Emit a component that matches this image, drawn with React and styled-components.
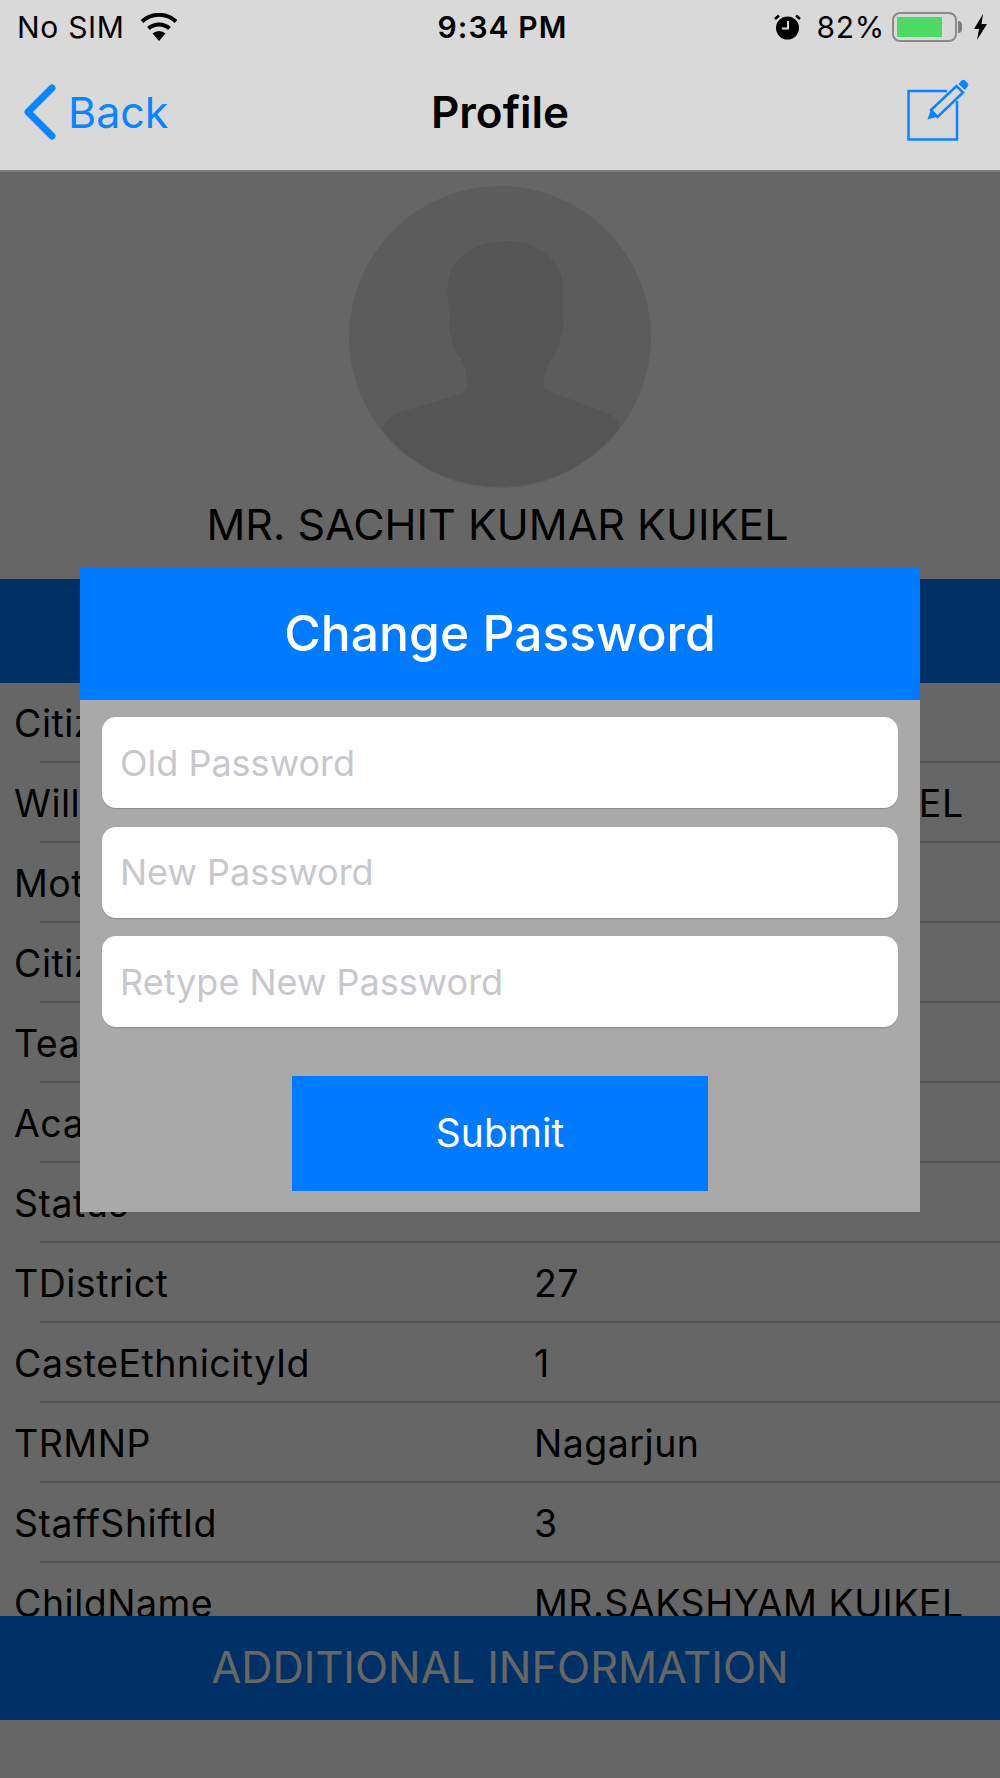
import React from 'react';
import styled, { createGlobalStyle } from 'styled-components';

const Global = createGlobalStyle`
  html, body {
    margin: 0;
    padding: 0;
    background: #fff;
  }
  * {
    box-sizing: border-box;
  }
`;

const Screen = styled.div`
  position: relative;
  width: 1000px;
  height: 1778px;
  overflow: hidden;
  display: flex;
  flex-direction: column;
  background: #fff;
  color: #000;
  font-family: Inter, 'Liberation Sans', sans-serif;
`;

const TopBars = styled.header`
  position: relative;
  z-index: 3;
  height: 172px;
  background: #d9d9d9;
  border-bottom: 2px solid #7d7d7d;
`;

const StatusBar = styled.div`
  height: 54px;
  padding: 0 12px 0 17px;
  display: grid;
  grid-template-columns: 1fr auto 1fr;
  align-items: center;
  font-size: 30px;
  letter-spacing: 0.7px;
`;

const StatusSide = styled.div`
  display: flex;
  align-items: center;
  justify-content: ${(p) => (p.$right ? 'flex-end' : 'flex-start')};
  gap: ${(p) => (p.$right ? '9px' : '15px')};
`;

const Clock = styled.div`
  font-weight: 600;
  letter-spacing: 1.1px;
`;

const AlarmWrap = styled.div`
  display: flex;
  margin-right: 7px;
`;

const NavBar = styled.div`
  height: 116px;
  display: grid;
  grid-template-columns: 1fr auto 1fr;
  align-items: center;
`;

const BackLink = styled.div`
  padding-left: 23px;
  display: flex;
  align-items: center;
  gap: 11px;
  color: #0a84ff;
  font-size: 43px;
`;

const NavTitle = styled.div`
  font-size: 44px;
  font-weight: 600;
`;

const NavAction = styled.div`
  padding: 0 31px 4px 0;
  display: flex;
  justify-content: flex-end;
`;

const Hero = styled.section`
  height: 407px;
  flex: none;
  display: flex;
  flex-direction: column;
  align-items: center;
  padding-top: 14px;
`;

const Name = styled.div`
  margin: 10px 5px 0 0;
  font-size: 43px;
  line-height: 52px;
`;

const Band = styled.div`
  height: 104px;
  flex: none;
  padding-bottom: 3px;
  display: flex;
  align-items: center;
  justify-content: center;
  background: #007aff;
  color: #fff;
  font-size: 43.3px;
`;

const Rows = styled.div`
  flex: 1;
  min-height: 0;
  overflow: hidden;
`;

const Row = styled.div`
  position: relative;
  height: 80px;
  padding: 0 14px;
  display: grid;
  grid-template-columns: 520px 1fr;
  align-items: center;
  font-size: 37.5px;
  letter-spacing: 0.5px;
  white-space: nowrap;
  &::after {
    content: '';
    position: absolute;
    left: 40px;
    right: 0;
    bottom: 0;
    height: 2px;
    background: #cfcfcf;
  }
`;

const BottomSpace = styled.div`
  height: 58px;
  flex: none;
`;

const Dim = styled.div`
  position: absolute;
  inset: 0;
  z-index: 1;
  background: rgba(0, 0, 0, 0.6);
`;

const Modal = styled.div`
  position: absolute;
  z-index: 2;
  left: 80px;
  top: 567px;
  width: 840px;
  height: 645px;
  background: #a9a9a9;
`;

const ModalTitle = styled.div`
  height: 133px;
  padding-bottom: 2px;
  display: flex;
  align-items: center;
  justify-content: center;
  background: #007aff;
  color: #fff;
  font-size: 49.8px;
  font-weight: 500;
`;

const Fields = styled.div`
  padding: 17px 22px 0;
  display: flex;
  flex-direction: column;
  gap: 18.500px;
`;

const Field = styled.div`
  height: 91px;
  padding: 0 18px;
  display: flex;
  align-items: center;
  background: #fff;
  border-radius: 14px;
  box-shadow: 0 1px 1px rgba(0, 0, 0, 0.18);
  color: #c7c7cd;
  font-size: 36px;
`;

const SubmitButton = styled.div`
  width: 416px;
  height: 115px;
  margin: 49px auto 0;
  padding-bottom: 2px;
  display: flex;
  align-items: center;
  justify-content: center;
  background: #007aff;
  color: #fff;
  font-size: 39px;
`;

const Battery = styled.div`
  position: relative;
  width: 65px;
  height: 30px;
  margin: 0 7px 0 -2px;
  padding: 3px;
  border: 2px solid #8a8a8a;
  border-radius: 8px;
  &::after {
    content: '';
    position: absolute;
    right: -7px;
    top: 7px;
    width: 4px;
    height: 12px;
    background: #7d7d7d;
    border-radius: 0 4px 4px 0;
  }
`;

const BatteryFill = styled.div`
  width: 82%;
  height: 100%;
  background: #4cd964;
`;

const rows = [
  ['CitizenshipNo', ''],
  ['WillName', 'MR.SAKSHYAM KUIKEL'],
  ['MotherName', ''],
  ['CitizenshipDate', ''],
  ['TeacherType', ''],
  ['AcademicLevel', ''],
  ['Status', ''],
  ['TDistrict', '27'],
  ['CasteEthnicityId', '1'],
  ['TRMNP', 'Nagarjun'],
  ['StaffShiftId', '3'],
  ['ChildName', 'MR.SAKSHYAM KUIKEL'],
];

const WifiIcon = () => (
  <svg width="38" height="28" viewBox="0 0 38 28">
    <path d="M19 28l-6.500-7.500a9.500 9.500 0 0 1 13 0z" fill="#000" />
    <path d="M8.500 15.500a15.500 15.500 0 0 1 21 0" fill="none" stroke="#000" strokeWidth="4" />
    <path d="M2 8.500a25 25 0 0 1 34 0" fill="none" stroke="#000" strokeWidth="4" />
  </svg>
);

const AlarmIcon = () => (
  <svg width="27" height="26" viewBox="0 0 27 26">
    <circle cx="13.500" cy="14" r="11.500" fill="#000" />
    <path d="M14 7v7.500H8" fill="none" stroke="#d9d9d9" strokeWidth="2" />
    <path d="M1 5l4-3.500M26 5l-4-3.500" fill="none" stroke="#000" strokeWidth="2.500" />
  </svg>
);

const BoltIcon = () => (
  <svg width="15" height="26" viewBox="0 0 15 26">
    <path d="M10 0L1 15h5l-2 11 10-16H8.500z" fill="#000" />
  </svg>
);

const BackIcon = () => (
  <svg width="34" height="58" viewBox="0 0 34 58">
    <path d="M29 5L5 29l24 24" fill="none" stroke="#0a84ff" strokeWidth="7" strokeLinecap="round" strokeLinejoin="round" />
  </svg>
);

const EditIcon = () => (
  <svg width="62" height="62" viewBox="0 0 62 62">
    <path d="M40 12H1.500v48.500H50V22" fill="none" stroke="#0a84ff" strokeWidth="2.500" />
    <path d="M24 31L49.500 7l6.500 6.500L30.500 38z" fill="none" stroke="#0a84ff" strokeWidth="2.500" />
    <path d="M20.500 40.500L24 30l7.500 7.500z" fill="#0a84ff" />
    <path d="M51.500 5L54.500 1.500a2.500 2.500 0 0 1 3.500 0l2.500 2.500a2.500 2.500 0 0 1 0 3.500L58 11z" fill="#0a84ff" />
  </svg>
);

const Avatar = () => (
  <svg width="302" height="302" viewBox="0 0 302 302">
    <circle cx="151" cy="151" r="151" fill="#e6e6e6" />
    <path
      d="M32 243C38 234 44 229 50 226L112 208C118 206 119 200 118 194C117 186 115 178 113 174C106 166 103 160 103 152C99 148 99 136 101 130C98 116 98 104 99 96C102 70 130 55 158 55C185 55 212 70 214 100C215 110 214 120 213 128C216 136 214 148 211 152C210 162 206 170 201 174C198 182 195 192 194 198C194 202 196 204 200 205L260 228C266 231 270 236 271 241A151 151 0 0 1 32 243Z"
      fill="#d4d4d4"
    />
  </svg>
);

export default function App() {
  return (
    <Screen>
      <Global />
      <TopBars>
        <StatusBar>
          <StatusSide>
            <span>No SIM</span>
            <WifiIcon />
          </StatusSide>
          <Clock>9:34 PM</Clock>
          <StatusSide $right>
            <AlarmWrap>
              <AlarmIcon />
            </AlarmWrap>
            <span>82%</span>
            <Battery>
              <BatteryFill />
            </Battery>
            <BoltIcon />
          </StatusSide>
        </StatusBar>
        <NavBar>
          <BackLink>
            <BackIcon />
            <span>Back</span>
          </BackLink>
          <NavTitle>Profile</NavTitle>
          <NavAction>
            <EditIcon />
          </NavAction>
        </NavBar>
      </TopBars>
      <Hero>
        <Avatar />
        <Name>MR. SACHIT KUMAR KUIKEL</Name>
      </Hero>
      <Band>BASIC INFORMATION</Band>
      <Rows>
        {rows.map(([label, value]) => (
          <Row key={label}>
            <span>{label}</span>
            <span>{value}</span>
          </Row>
        ))}
      </Rows>
      <Band>ADDITIONAL INFORMATION</Band>
      <BottomSpace />
      <Dim />
      <Modal>
        <ModalTitle>Change Password</ModalTitle>
        <Fields>
          <Field>Old Password</Field>
          <Field>New Password</Field>
          <Field>Retype New Password</Field>
        </Fields>
        <SubmitButton>Submit</SubmitButton>
      </Modal>
    </Screen>
  );
}
